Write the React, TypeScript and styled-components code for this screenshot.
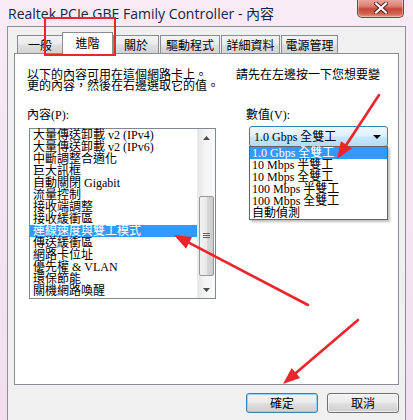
import React from "react";
import styled, { createGlobalStyle } from "styled-components";

const Global = createGlobalStyle`
  html, body { margin: 0; padding: 0; }
  body { width: 413px; height: 420px; overflow: hidden; background: #f4e3f1; }
  #root { width: 413px; height: 420px; }
`;

const MING = `"Liberation Serif", "Noto Sans CJK TC", serif`;
const SANS = `"Noto Sans CJK TC", "Noto Sans", sans-serif`;

const Window = styled.div`
  position: relative;
  width: 413px;
  height: 420px;
  background: linear-gradient(180deg, #f8ebf6 0%, #f2deef 100%);
  display: flex;
  flex-direction: column;
  overflow: hidden;
`;

const TitleBar = styled.div`
  height: 26px;
  display: flex;
  align-items: flex-start;
  padding-left: 8px;
`;

const Title = styled.div`
  font-family: "Open Sans", "Noto Sans CJK TC", sans-serif;
  font-size: 14px;
  line-height: 16px;
  color: #15243d;
  white-space: nowrap;
  margin-top: 6px;
`;

const CloseButton = styled.div`
  margin-left: auto;
  margin-right: 9px;
  margin-top: -1px;
  width: 45px;
  height: 18px;
  border: 1px solid #8e3a36;
  border-top: none;
  border-radius: 0 0 5px 5px;
  background: linear-gradient(180deg, #ebaaa2 0%, #dd7f74 40%, #c8463a 55%, #d2604f 80%, #e49585 100%);
  box-shadow: inset 0 0 0 1px rgba(255, 255, 255, 0.35);
  display: flex;
  align-items: center;
  justify-content: center;
`;

const Client = styled.div`
  flex: 1;
  margin: 0 7px;
  border: 1px solid #8d8f99;
  border-bottom: none;
  background: #f0f0f0;
  padding: 5px 6px 0;
  display: flex;
  flex-direction: column;
`;

const TabRow = styled.div`
  height: 21px;
  display: flex;
  align-items: flex-end;
  padding-left: 3px;
`;

const Tab = styled.div<{ $w: number; $active?: boolean; $ml?: number }>`
  box-sizing: border-box;
  width: ${(p) => p.$w}px;
  margin-left: ${(p) => p.$ml ?? 0}px;
  height: ${(p) => (p.$active ? 22 : 18)}px;
  margin-bottom: ${(p) => (p.$active ? -1 : 0)}px;
  border: 1px solid #898c95;
  border-bottom: none;
  background: ${(p) =>
    p.$active
      ? "#ffffff"
      : "linear-gradient(180deg, #f3f3f3 0%, #ebebeb 45%, #dedede 55%, #d3d3d3 100%)"};
  position: relative;
  z-index: ${(p) => (p.$active ? 2 : 1)};
  font-family: ${SANS};
  font-size: 12px;
  line-height: ${(p) => (p.$active ? 19 : 17)}px;
  text-align: center;
  color: #000;
  white-space: nowrap;
`;

const Panel = styled.div`
  position: relative;
  box-sizing: border-box;
  height: 332px;
  border: 1px solid #898c95;
  background: #ffffff;
  padding: 16px 0 0 12px;
  font-family: ${MING};
  font-size: 12px;
  color: #000;
`;

const Description = styled.div`
  line-height: 11px;
  white-space: nowrap;
`;

const Gap = styled.span<{ $w: number }>`
  display: inline-block;
  width: ${(p) => p.$w}px;
`;

const Columns = styled.div`
  display: flex;
  margin-top: 17px;
`;

const LeftCol = styled.div`
  display: flex;
  flex-direction: column;
`;

const RightCol = styled.div`
  display: flex;
  flex-direction: column;
  margin-left: 30px;
`;

const FieldLabel = styled.div`
  line-height: 12px;
  height: 12px;
`;

const ListBox = styled.div`
  box-sizing: border-box;
  margin: 7px 0 0 2px;
  width: 187px;
  height: 171px;
  border: 1px solid #828790;
  display: flex;
`;

const ListItems = styled.div`
  flex: 1;
  display: flex;
  flex-direction: column;
`;

const ListItem = styled.div<{ $sel?: boolean }>`
  height: 12px;
  line-height: 12px;
  padding-left: 3px;
  white-space: nowrap;
  background: ${(p) => (p.$sel ? "#3399ff" : "transparent")};
  color: ${(p) => (p.$sel ? "#ffffff" : "#000")};
`;

const ScrollBar = styled.div`
  width: 17px;
  display: flex;
  flex-direction: column;
  background: linear-gradient(90deg, #e6e6e6 0%, #f4f4f4 40%, #fafafa 100%);
  border-left: 1px solid #eaeaea;
`;

const ScrollArrow = styled.div`
  height: 17px;
  display: flex;
  align-items: center;
  justify-content: center;
`;

const ScrollTrack = styled.div`
  flex: 1;
  display: flex;
  flex-direction: column;
  padding-top: 50px;
`;

const Thumb = styled.div`
  box-sizing: border-box;
  margin: 0 1px;
  height: 80px;
  border: 1px solid #989898;
  border-radius: 2px;
  background: linear-gradient(90deg, #f2f2f2 0%, #e9e9e9 50%, #d8d8d8 51%, #cccccc 100%);
  display: flex;
  align-items: center;
  justify-content: center;
`;

const ComboWrap = styled.div`
  position: relative;
  margin: 5px 0 0 3px;
`;

const Combo = styled.div`
  box-sizing: border-box;
  width: 139px;
  height: 21px;
  border: 1px solid #3c7fb1;
  border-radius: 3px;
  background: linear-gradient(180deg, #edf7fd 0%, #dff2fc 45%, #c6e7fb 55%, #b3dcf5 100%);
  display: flex;
  align-items: center;
  padding: 0 6px 0 4px;
`;

const ComboText = styled.div`
  flex: 1;
  line-height: 12px;
  white-space: nowrap;
`;

const Popup = styled.div`
  position: absolute;
  left: 0;
  top: 20px;
  box-sizing: border-box;
  width: 139px;
  border: 1px solid #646464;
  background: #ffffff;
  box-shadow: 2px 2px 2px rgba(0, 0, 0, 0.25);
  display: flex;
  flex-direction: column;
  z-index: 3;
`;

const PopupItem = styled.div<{ $sel?: boolean }>`
  height: 12px;
  line-height: 12px;
  padding-left: 2px;
  white-space: nowrap;
  background: ${(p) => (p.$sel ? "#3399ff" : "transparent")};
  color: ${(p) => (p.$sel ? "#ffffff" : "#000")};
`;

const ButtonRow = styled.div`
  display: flex;
  justify-content: flex-end;
  gap: 9px;
  margin-top: 8px;
  padding-right: 0;
`;

const Button = styled.div<{ $default?: boolean }>`
  box-sizing: border-box;
  width: 72px;
  height: 20px;
  border: 1px solid ${(p) => (p.$default ? "#3c7fb1" : "#707070")};
  border-radius: 3px;
  background: linear-gradient(180deg, #f2f2f2 0%, #ebebeb 45%, #dddddd 55%, #cfcfcf 100%);
  box-shadow: ${(p) => (p.$default ? "inset 0 0 0 1px #8fd3f5" : "inset 0 0 0 1px rgba(255,255,255,0.6)")};
  font-family: ${SANS};
  font-size: 12px;
  line-height: 18px;
  text-align: center;
  color: #000;
`;

const Overlay = styled.svg`
  position: absolute;
  left: 0;
  top: 0;
  pointer-events: none;
  z-index: 10;
`;

const RED = "#e8262b";

function Arrow({ x1, y1, x2, y2 }: { x1: number; y1: number; x2: number; y2: number }) {
  const dx = x2 - x1;
  const dy = y2 - y1;
  const len = Math.hypot(dx, dy);
  const ux = dx / len;
  const uy = dy / len;
  const hl = 17;
  const hw = 6.5;
  const bx = x2 - ux * hl;
  const by = y2 - uy * hl;
  const px = -uy;
  const py = ux;
  const pts = `${x2},${y2} ${bx + px * hw},${by + py * hw} ${bx - px * hw},${by - py * hw}`;
  return (
    <g>
      <line x1={x1} y1={y1} x2={bx + ux * 2} y2={by + uy * 2} stroke={RED} strokeWidth={2.6} strokeLinecap="round" />
      <polygon points={pts} fill={RED} />
    </g>
  );
}

const TABS = [
  { label: "一般", w: 46, ml: 0 },
  { label: "進階", w: 51, ml: -1, active: true },
  { label: "關於", w: 46, ml: 0 },
  { label: "驅動程式", w: 60, ml: 1 },
  { label: "詳細資料", w: 59, ml: 1 },
  { label: "電源管理", w: 57, ml: 1 },
];

const ITEMS = [
  "大量傳送卸載 v2 (IPv4)",
  "大量傳送卸載 v2 (IPv6)",
  "中斷調整合適化",
  "巨大訊框",
  "自動關閉 Gigabit",
  "流量控制",
  "接收端調整",
  "接收緩衝區",
  "連線速度與雙工模式",
  "傳送緩衝區",
  "網路卡位址",
  "優先權 & VLAN",
  "環保節能",
  "關機網路喚醒",
];

const VALUES = ["1.0 Gbps 全雙工", "10 Mbps 半雙工", "10 Mbps 全雙工", "100 Mbps 半雙工", "100 Mbps 全雙工", "自動偵測"];

export default function App() {
  return (
    <>
      <Global />
      <Window>
        <TitleBar>
          <Title>Realtek PCIe GBE Family Controller - 內容</Title>
          <CloseButton>
            <svg width="14" height="12" viewBox="0 0 14 12">
              <path d="M2 1.5 L12 10.5 M12 1.5 L2 10.5" stroke="#4a2020" strokeWidth="4" strokeLinecap="square" />
              <path d="M2 1.5 L12 10.5 M12 1.5 L2 10.5" stroke="#ffffff" strokeWidth="2.2" strokeLinecap="square" />
            </svg>
          </CloseButton>
        </TitleBar>
        <Client>
          <TabRow>
            {TABS.map((t) => (
              <Tab key={t.label} $w={t.w} $ml={t.ml} $active={t.active}>
                {t.label}
              </Tab>
            ))}
          </TabRow>
          <Panel>
            <Description>
              以下的內容可用在這個網路卡上。<Gap $w={29} />請先在左邊按一下您想要變
              <br />
              更的內容，然後在右邊選取它的值。
            </Description>
            <Columns>
              <LeftCol>
                <FieldLabel>內容(P):</FieldLabel>
                <ListBox>
                  <ListItems>
                    {ITEMS.map((it, i) => (
                      <ListItem key={it} $sel={i === 8}>
                        {it}
                      </ListItem>
                    ))}
                  </ListItems>
                  <ScrollBar>
                    <ScrollArrow>
                      <svg width="7" height="4" viewBox="0 0 7 4">
                        <path d="M0 4 L3.5 0 L7 4 Z" fill="#4d4d4d" />
                      </svg>
                    </ScrollArrow>
                    <ScrollTrack>
                      <Thumb>
                        <svg width="7" height="6" viewBox="0 0 7 6">
                          <path d="M0 0.5 H7 M0 2.5 H7 M0 4.5 H7" stroke="#606060" strokeWidth="1" />
                        </svg>
                      </Thumb>
                    </ScrollTrack>
                    <ScrollArrow>
                      <svg width="7" height="4" viewBox="0 0 7 4">
                        <path d="M0 0 L3.5 4 L7 0 Z" fill="#4d4d4d" />
                      </svg>
                    </ScrollArrow>
                  </ScrollBar>
                </ListBox>
              </LeftCol>
              <RightCol>
                <FieldLabel>數值(V):</FieldLabel>
                <ComboWrap>
                  <Combo>
                    <ComboText>1.0 Gbps 全雙工</ComboText>
                    <svg width="8" height="4" viewBox="0 0 8 4">
                      <path d="M0 0 L8 0 L4 4 Z" fill="#000" />
                    </svg>
                  </Combo>
                  <Popup>
                    {VALUES.map((v, i) => (
                      <PopupItem key={v} $sel={i === 0}>
                        {v}
                      </PopupItem>
                    ))}
                  </Popup>
                </ComboWrap>
              </RightCol>
            </Columns>
          </Panel>
          <ButtonRow>
            <Button $default>確定</Button>
            <Button>取消</Button>
          </ButtonRow>
        </Client>
        <Overlay width="413" height="420" viewBox="0 0 413 420">
          <rect x="45" y="18" width="70" height="37" fill="none" stroke={RED} strokeWidth="2" />
          <Arrow x1={379} y1={95} x2={337} y2={159} />
          <Arrow x1={308} y1={305} x2={174} y2={235} />
          <Arrow x1={358} y1={320} x2={283} y2={384} />
        </Overlay>
      </Window>
    </>
  );
}
